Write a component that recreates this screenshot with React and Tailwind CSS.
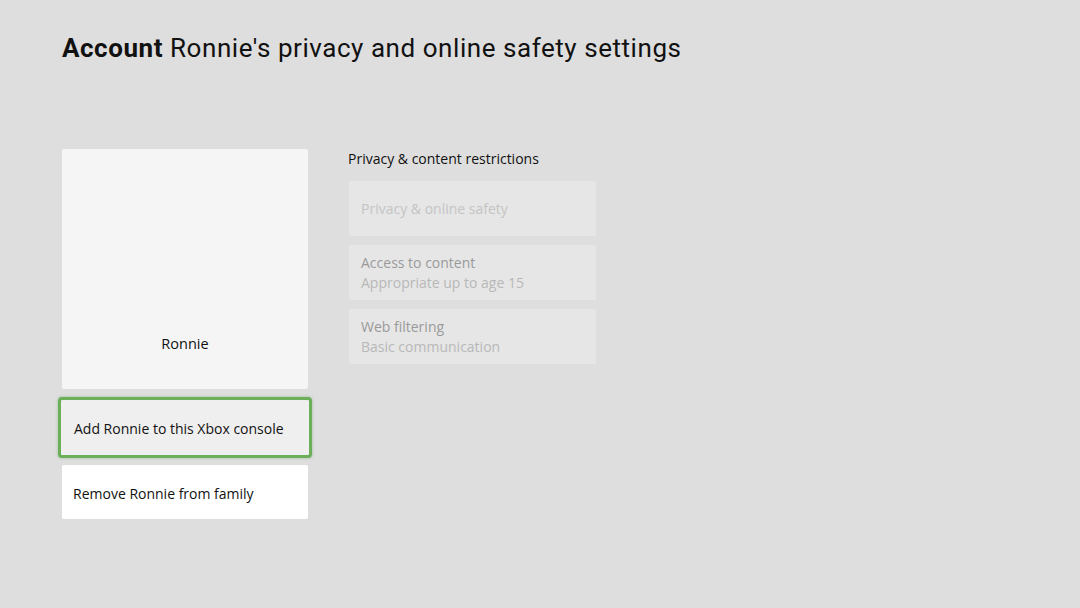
export default function App() {
  const rows = [
    { title: 'Privacy & online safety', sub: null, dim: true },
    { title: 'Access to content', sub: 'Appropriate up to age 15' },
    { title: 'Web filtering', sub: 'Basic communication' },
  ];

  return (
    <div className="w-[1080px] h-[608px] bg-[#dedede] overflow-hidden" style={{ fontFamily: '"Open Sans", "Noto Sans", sans-serif' }}>
      {/* Header */}
      <div className="pt-[30px] pl-[62px] h-[149px]">
        <h1 className="text-[26px] leading-[37px] text-[#111] tracking-[0.55px]" style={{ fontFamily: 'Roboto, "Liberation Sans", sans-serif' }}>
          <span className="font-bold">Account</span> Ronnie's privacy and online safety settings
        </h1>
      </div>

      <div className="flex pl-[62px] gap-[40px]">
        {/* Left column */}
        <div className="w-[246px] flex flex-col">
          <div className="h-[240px] bg-[#f5f5f5] rounded-[2px] flex flex-col justify-end items-center pb-[34px]">
            <span className="text-[14.5px] text-[#111]">Ronnie</span>
          </div>
          <div className="mt-[8px] -mx-[4px] h-[61px] border-[3px] border-[#6cae5a] rounded-[4px] bg-[#efefef] flex items-center pl-[13px] pt-[2px] shadow-[0_0_3px_rgba(90,160,80,0.5)]">
            <span className="text-[14px] text-[#111]">Add Ronnie to this Xbox console</span>
          </div>
          <div className="mt-[7px] h-[54px] bg-white rounded-[2px] flex items-center pl-[11px] pt-[2px]">
            <span className="text-[14px] text-[#111]">Remove Ronnie from family</span>
          </div>
        </div>

        {/* Right column */}
        <div className="w-[248px] flex flex-col">
          <div className="h-[32px] flex items-start">
            <span className="text-[14px] leading-[20px] text-[#111]">Privacy &amp; content restrictions</span>
          </div>
          <div className="flex flex-col gap-[9px] pl-[1px]">
            {rows.map((r) => (
              <div key={r.title} className="h-[55px] bg-[#e6e6e6] rounded-[2px] flex flex-col justify-center pl-[12px] pt-[1px]">
                <span className={`text-[14px] leading-[20px] ${r.dim ? 'text-[#c4c4c4]' : 'text-[#9a9a9a]'}`}>{r.title}</span>
                {r.sub && <span className="text-[14px] leading-[20px] text-[#b8b8b8]">{r.sub}</span>}
              </div>
            ))}
          </div>
        </div>
      </div>
    </div>
  );
}
